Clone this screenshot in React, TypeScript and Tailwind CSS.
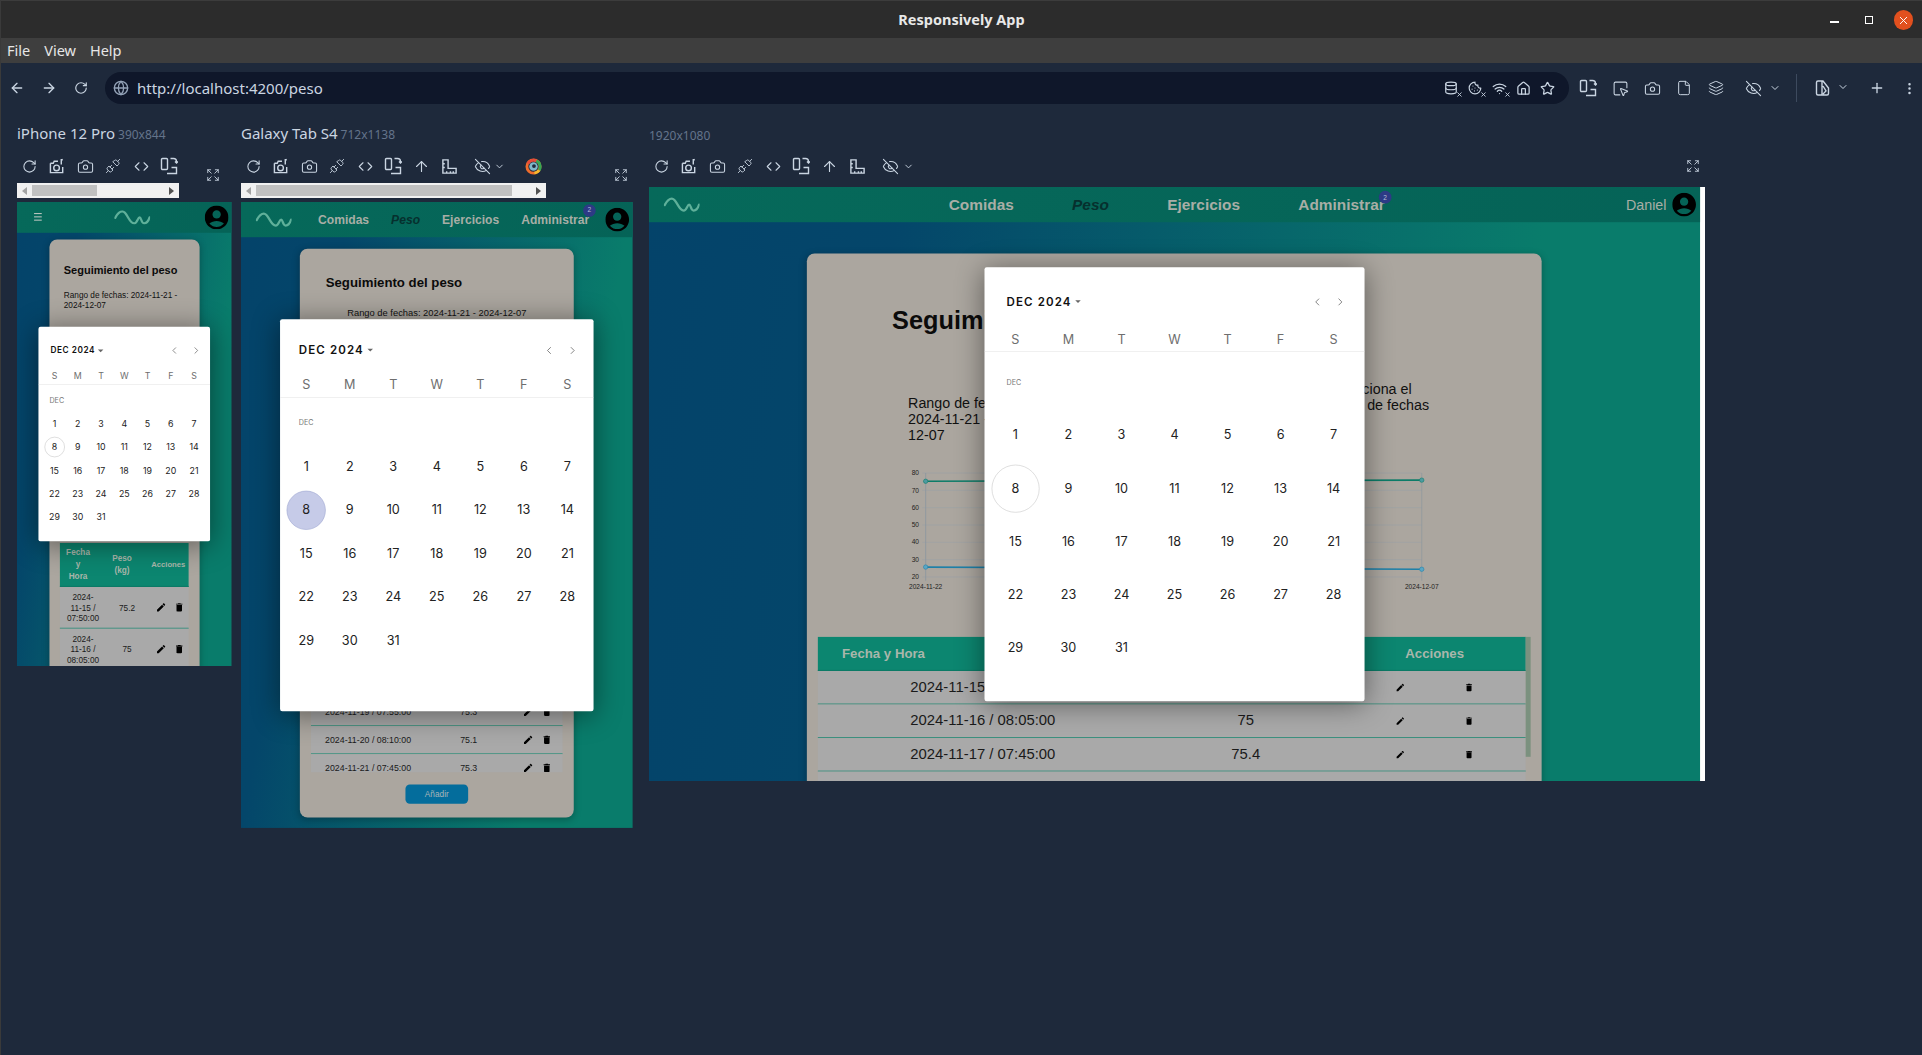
import React from "react";
import {
  ArrowLeft, ArrowRight, ArrowUp, Camera, ChevronDown, ChevronLeft, ChevronRight, Code, Cookie, Database,
  EllipsisVertical, Expand, EyeOff, File, Globe, House, Layers, Plus, RotateCw, SquareMousePointer, Star, Unplug, Wifi, X,
} from "lucide-react";

const sans = "font-['Liberation_Sans',Arial,sans-serif]";
const ui = "font-['Noto_Sans','Open_Sans',sans-serif]";
const cal = "font-['Inter','Liberation_Sans',sans-serif]";

function Rotate({ size = 18 }: { size?: number }) {
  return (
    <svg width={size} height={size} viewBox="0 0 18 18" fill="none" stroke="currentColor" strokeWidth="1.4">
      <rect x="1.5" y="1.5" width="6" height="11" rx="1" />
      <path d="M10.5 1.5h3a3 3 0 0 1 3 3v1.5M15 4.5l1.5 1.5L18 4.5M7 16.5h9.5v-6h-5" />
    </svg>
  );
}
function CameraPlus() {
  return (
    <svg width="17" height="17" viewBox="0 0 18 18" fill="none" stroke="currentColor" strokeWidth="1.5">
      <path d="M1.5 5.5h3l1-2h4M1.5 5.5v10h13v-6" />
      <circle cx="8" cy="10.5" r="3" />
      <path d="M13 1v6M14.5 1.5l-1.5 1" />
    </svg>
  );
}
function RulerCorner() {
  return (
    <svg width="17" height="17" viewBox="0 0 18 18" fill="none" stroke="currentColor" strokeWidth="1.5">
      <path d="M2 2h5.5v9H16v5H2zM2 6h2M2 10h2M6 14v2M10 14v2M13 14v2" />
    </svg>
  );
}
function Lighthouse() {
  return (
    <svg width="17" height="17" viewBox="0 0 18 18" fill="none">
      <circle cx="9" cy="9" r="7" stroke="#ef6c2b" strokeWidth="3" />
      <path d="M3 6a7 7 0 0 1 9-3" stroke="#e64a3b" strokeWidth="3" />
      <path d="M12 3a7 7 0 0 1 3 10" stroke="#35a853" strokeWidth="3" />
      <path d="M15 13a7 7 0 0 1-5 3" stroke="#f5b82e" strokeWidth="3" />
      <circle cx="9" cy="9" r="4.5" fill="#7fb8c9" />
      <circle cx="9.5" cy="8.5" r="2" fill="#1e293b" />
    </svg>
  );
}
function SplitDoc() {
  return (
    <svg width="18" height="18" viewBox="0 0 18 18" fill="none" stroke="currentColor" strokeWidth="1.4">
      <path d="M8 2H4a1.5 1.5 0 0 0-1.5 1.5v11A1.5 1.5 0 0 0 4 16h9a1.5 1.5 0 0 0 1.5-1.5V9L9 2zM8 2v14M9 7l3 5-3 3" />
    </svg>
  );
}
function Logo({ className }: { className: string }) {
  return (
    <svg className={className} viewBox="0 0 36 14" fill="none" stroke="#5fb09a" strokeWidth="2.3" strokeLinecap="round">
      <path d="M0.8 7.5C3 3.5 5.5 1 8 1c5 0 6.5 12 12 12 3 0 3.5-6 5.5-6 1.7 0 1.5 6 4.5 6 3 0 4.7-3.5 5.5-6" />
    </svg>
  );
}
function Avatar() {
  return (
    <svg className="w-[36px] h-[36px] scale-[1.2] shrink-0" viewBox="2 2 20 20" fill="#000">
      <path d="M12 2C6.48 2 2 6.48 2 12s4.48 10 10 10 10-4.48 10-10S17.52 2 12 2zm0 4c1.93 0 3.5 1.57 3.5 3.5S13.93 13 12 13s-3.5-1.57-3.5-3.5S10.07 6 12 6zm0 14c-2.03 0-4.43-.82-6.14-2.88C7.55 15.8 9.68 15 12 15s4.45.8 6.14 2.12C16.43 19.18 14.03 20 12 20z" />
    </svg>
  );
}
function Edit({ className }: { className: string }) {
  return (
    <svg className={className} viewBox="0 0 24 24" fill="#000">
      <path d="M3 17.25V21h3.75L17.81 9.94l-3.75-3.75L3 17.25zM20.71 7.04c.39-.39.39-1.02 0-1.41l-2.34-2.34c-.39-.39-1.02-.39-1.41 0l-1.83 1.83 3.75 3.75 1.83-1.83z" />
    </svg>
  );
}
function Trash({ className }: { className: string }) {
  return (
    <svg className={className} viewBox="0 0 24 24" fill="#000">
      <path d="M6 19c0 1.1.9 2 2 2h8c1.1 0 2-.9 2-2V7H6v12zM19 4h-3.5l-1-1h-5l-1 1H5v2h14V4z" />
    </svg>
  );
}

function Marked({ children }: { children: React.ReactNode }) {
  return (
    <span className="relative w-[24px] h-[20px] flex items-center justify-center text-slate-300">
      {children}
      <X size={7} strokeWidth={3} className="absolute right-0 bottom-0" />
    </span>
  );
}

function Toolbar({ extended, lighthouse }: { extended?: boolean; lighthouse?: boolean }) {
  const cell = "w-7 h-7 flex items-center justify-center shrink-0";
  return (
    <div className="flex h-7 items-center text-slate-300 -ml-[2px]">
      <span className={cell}><RotateCw size={15} strokeWidth={1.7} /></span>
      <span className={cell}><CameraPlus /></span>
      <span className={cell}><Camera size={17} strokeWidth={1.5} /></span>
      <span className={cell}><Unplug size={16} strokeWidth={1.3} /></span>
      <span className={cell}><Code size={15} strokeWidth={1.7} /></span>
      <span className={cell}><Rotate /></span>
      {extended && (
        <>
          <span className={cell}><ArrowUp size={17} strokeWidth={1.6} /></span>
          <span className={cell}><RulerCorner /></span>
          <span className={`${cell} ml-[5px]`}><EyeOff size={17} strokeWidth={1.5} /></span>
          <span className="w-[12px] h-7 flex items-center justify-center -ml-[2px]"><ChevronDown size={11} /></span>
        </>
      )}
      {lighthouse && <span className={`${cell} ml-[14px]`}><Lighthouse /></span>}
    </div>
  );
}

function ScrollTrack({ track, thumb }: { track: string; thumb: string }) {
  return (
    <div className={`mt-[3px] h-[15px] bg-[#f1f1f1] flex items-center ${track}`}>
      <span className="w-0 h-0 ml-[5px] border-y-[4px] border-y-transparent border-r-[5px] border-r-[#a3a3a3]" />
      <span className={`h-[11px] bg-[#c1c1c1] ${thumb}`} />
      <span className="w-0 h-0 ml-auto mr-[5px] border-y-[4px] border-y-transparent border-l-[5px] border-l-[#505050]" />
    </div>
  );
}

const weekdays = ["S", "M", "T", "W", "T", "F", "S"];
const days = Array.from({ length: 31 }, (_, i) => i + 1);

type CalCfg = {
  box: string; header: string; title: string; caret: string; arrows: string; arrowSize: number;
  week: string; weekRow: string; dec: string; cell: string; selected: string; day: string;
};

const calIphone: CalCfg = {
  box: "w-[312px] h-[390px]",
  header: "mt-[25px] h-[36px] pl-[22px] pr-[15px]",
  title: "text-[15px] tracking-[1px]",
  caret: "ml-[5px] border-x-[5px] border-t-[5px]",
  arrows: "gap-[20px]",
  arrowSize: 20,
  week: "mt-[10px] h-[34px]",
  weekRow: "text-[16px]",
  dec: "h-[50px] pt-[22px] pl-[20px]",
  cell: "h-[42.3px]",
  selected: "w-[37px] h-[37px] border border-[#c4c4c4]",
  day: "text-[16px]",
};
const calGalaxy: CalCfg = {
  box: "w-[570px] h-[713px]",
  header: "mt-[37px] h-[40px] pl-[34px] pr-[27px]",
  title: "text-[21px] tracking-[2px]",
  caret: "ml-[7px] border-x-[5px] border-t-[5px]",
  arrows: "gap-[21px]",
  arrowSize: 22,
  week: "mt-[20px] h-[46px]",
  weekRow: "text-[23px]",
  dec: "h-[86.5px] pt-[38px] pl-[34px]",
  cell: "h-[79px]",
  selected: "w-[71px] h-[71px] border border-[#9aa3cf] bg-[#c6cbe8]",
  day: "text-[23px]",
};
const calDesktop: CalCfg = {
  box: "w-[691px] h-[789px]",
  header: "mt-[43px] h-[40px] pl-[40px] pr-[33px]",
  title: "text-[21px] tracking-[2px]",
  caret: "ml-[7px] border-x-[5px] border-t-[5px]",
  arrows: "gap-[20px]",
  arrowSize: 22,
  week: "mt-[27px] h-[44px]",
  weekRow: "text-[23px]",
  dec: "h-[104px] pt-[48px] pl-[40px]",
  cell: "h-[96.4px]",
  selected: "w-[87px] h-[87px] border border-[#c4c4c4]",
  day: "text-[23px]",
};

function Calendar({ c }: { c: CalCfg }) {
  return (
    <div className="absolute inset-0 flex items-center justify-center">
      <div className={`${c.box} ${cal} bg-white rounded-[4px] shadow-[0_5px_50px_rgba(0,0,0,0.45)] overflow-hidden`}>
        <div className={`${c.header} flex items-center justify-between`}>
          <div className="flex items-center">
            <span className={`${c.title} font-semibold text-[#111]`}>DEC 2024</span>
            <span className={`${c.caret} w-0 h-0 border-x-transparent border-t-[#666]`} />
          </div>
          <div className={`flex items-center text-[#666] ${c.arrows}`}>
            <ChevronLeft size={c.arrowSize} strokeWidth={1.6} />
            <ChevronRight size={c.arrowSize} strokeWidth={1.6} />
          </div>
        </div>
        <div className={`${c.week} ${c.weekRow} grid grid-cols-7 px-2 items-center text-center text-[#6e6e6e] border-b border-[#e4e4e4]`}>
          {weekdays.map((d, i) => <span key={i}>{d}</span>)}
        </div>
        <div className={`${c.dec} text-[13px] leading-[14px] text-[#777]`}>DEC</div>
        <div className={`grid grid-cols-7 px-2 ${c.day} text-[#222]`}>
          {days.map((d) => (
            <div key={d} className={`${c.cell} flex items-center justify-center`}>
              {d === 8 ? <span className={`${c.selected} rounded-full flex items-center justify-center`}>{d}</span> : d}
            </div>
          ))}
        </div>
      </div>
    </div>
  );
}

function Badge({ className }: { className: string }) {
  return (
    <span className={`absolute w-[23px] h-[23px] rounded-full bg-[#2d3a85] text-[#b9bdd8] text-[12px] font-normal flex items-center justify-center ${className}`}>2</span>
  );
}

const pageBg = "bg-[linear-gradient(100deg,#04436a_0%,#04466a_22%,#097c6b_78%)]";
const navBg = "bg-[linear-gradient(100deg,#06695a,#056357)]";
const cardBg = "bg-[#aba69f] rounded-[14px] shadow-[0_4px_14px_rgba(0,0,0,0.25)]";
const headBg = "bg-[#0c8670]";

function IphonePage() {
  const rows = [["2024-", "11-15 /", "07:50:00", "75.2"], ["2024-", "11-16 /", "08:05:00", "75"]];
  return (
    <div className={`relative w-[390px] h-[844px] scale-[0.55] origin-top-left overflow-hidden ${pageBg} ${sans}`}>
      <div className={`h-[56px] ${navBg} flex items-center justify-between pl-[31px] pr-[9px]`}>
        <div className="flex flex-col gap-[4px] w-[14px] mt-[-2px]">
          <span className="h-[2px] bg-[#b5c2bc]" /><span className="h-[2px] bg-[#b5c2bc]" /><span className="h-[2px] bg-[#b5c2bc]" />
        </div>
        <Logo className="w-[65px] h-[26px] ml-[28px]" />
        <Avatar />
      </div>
      <div className={`${cardBg} mt-[12px] ml-[59px] w-[273px] h-[800px]`}>
        <h1 className="pt-[43px] pl-[26px] text-[20px] leading-[24px] font-bold text-[#0b0b0b]">Seguimiento del peso</h1>
        <p className="pt-[26px] pl-[26px] text-[15px] leading-[17.5px] text-[#111]">Rango de fechas: 2024-11-21 -<br />2024-12-07</p>
        <div className="mt-[424px] ml-[19px] w-[234px]">
          <div className={`grid grid-cols-[66px_94px_74px] h-[80px] items-center text-center ${headBg} border-b-2 border-[#0b7a66] text-[#a9b6ab] text-[15px] font-bold leading-[22px]`}>
            <span>Fecha<br />y<br />Hora</span>
            <span>Peso<br />(kg)</span>
            <span className="text-[14px]">Acciones</span>
          </div>
          {rows.map((r) => (
            <div key={r[2]} className="grid grid-cols-[84px_76px_74px] h-[76px] items-center text-center bg-[#a9a9a9] border-b-2 border-[#3c8f7e] text-[#1a1a1a] text-[15px] leading-[19px]">
              <span>{r[0]}<br />{r[1]}<br />{r[2]}</span>
              <span>{r[3]}</span>
              <span className="flex justify-center gap-[13px] pl-[6px]"><Edit className="w-[20px] h-[20px]" /><Trash className="w-[20px] h-[20px]" /></span>
            </div>
          ))}
        </div>
      </div>
      <Calendar c={calIphone} />
    </div>
  );
}

function GalaxyPage() {
  const rows = [
    ["2024-11-15 / 07:50:00", "75.2"], ["2024-11-16 / 08:05:00", "75"], ["2024-11-17 / 07:45:00", "75.4"],
    ["2024-11-18 / 08:00:00", "75.2"], ["2024-11-19 / 07:55:00", "75.3"], ["2024-11-20 / 08:10:00", "75.1"], ["2024-11-21 / 07:45:00", "75.3"],
  ];
  return (
    <div className={`relative w-[712px] h-[1138px] scale-[0.55] origin-top-left overflow-hidden ${pageBg} ${sans}`}>
      <div className={`h-[64px] ${navBg} flex items-center pl-[27px] pr-[10px]`}>
        <Logo className="w-[65px] h-[28px] shrink-0" />
        <nav className="ml-[48px] flex gap-[40px] flex-1 text-[22px] font-bold text-[#a8aea6]">
          <span>Comidas</span>
          <span className="italic text-[#06302e]">Peso</span>
          <span>Ejercicios</span>
          <span className="relative">Administrar<Badge className="-top-[12px] -right-[12px]" /></span>
        </nav>
        <Avatar />
      </div>
      <div className={`${cardBg} mt-[21px] ml-[107px] w-[498px] h-[1034px]`}>
        <h1 className="pt-[47px] pl-[47px] text-[24px] leading-[30px] font-bold text-[#0b0b0b]">Seguimiento del peso</h1>
        <p className="pt-[28px] text-center text-[17px] leading-[24px] text-[#111]">Rango de fechas: 2024-11-21 - 2024-12-07</p>
        <div className="mt-[404px] ml-[20px] w-[458px] h-[418.5px] overflow-hidden">
          <div className={`h-[80px] ${headBg}`} />
          {rows.map((r) => (
            <div key={r[0]} className="grid grid-cols-[208px_158px_92px] h-[51px] items-center text-center bg-[#a9a9a9] border-b-2 border-[#4c9585] text-[#1a1a1a] text-[16px]">
              <span>{r[0]}</span>
              <span>{r[1]}</span>
              <span className="flex justify-center gap-[14px]"><Edit className="w-[20px] h-[20px]" /><Trash className="w-[20px] h-[20px]" /></span>
            </div>
          ))}
        </div>
        <div className="flex justify-center mt-[22px]">
          <span className="w-[114px] h-[35px] rounded-[8px] bg-[#046d9c] text-[#a9b5b8] text-[15px] flex items-center justify-center">Añadir</span>
        </div>
      </div>
      <Calendar c={calGalaxy} />
    </div>
  );
}

function Chart() {
  const ys = [80, 70, 60, 50, 40, 30, 20];
  const y = (v: number) => 13 + (80 - v) * 3.15;
  return (
    <svg className="w-[1027px] h-[236px]" viewBox="0 0 1027 236" fill="none">
      {ys.map((v) => (
        <g key={v}>
          <line x1="50" x2="958" y1={y(v)} y2={y(v)} stroke="#9aa0a6" strokeOpacity="0.75" strokeWidth="1.5" />
          <text x="44" y={y(v) + 4} textAnchor="end" fontSize="12" fill="#222" fontFamily="Liberation Sans, sans-serif">{v}</text>
        </g>
      ))}
      <line x1="56" x2="56" y1="13" y2="209" stroke="#8d979f" strokeWidth="1.5" />
      <line x1="958" x2="958" y1="13" y2="209" stroke="#8d979f" strokeOpacity="0.8" strokeWidth="1.5" />
      <path d="M56 28L958 26" stroke="#0c7c68" strokeWidth="3" />
      <path d="M56 184L958 188" stroke="#1f80a8" strokeWidth="3" />
      <circle cx="56" cy="28" r="4" fill="#4d9aa0" stroke="#0c7c68" />
      <circle cx="958" cy="26" r="4" fill="#4d9aa0" stroke="#0c7c68" />
      <circle cx="56" cy="184" r="4" fill="#5aa6c4" stroke="#1f80a8" />
      <circle cx="958" cy="188" r="4" fill="#5aa6c4" stroke="#1f80a8" />
      <text x="56" y="224" textAnchor="middle" fontSize="12" fill="#222" fontFamily="Liberation Sans, sans-serif">2024-11-22</text>
      <text x="958" y="224" textAnchor="middle" fontSize="12" fill="#222" fontFamily="Liberation Sans, sans-serif">2024-12-07</text>
    </svg>
  );
}

function DesktopPage() {
  const rows = [
    ["2024-11-15 / 07:50:00", "75.2"], ["2024-11-16 / 08:05:00", "75"], ["2024-11-17 / 07:45:00", "75.4"],
  ];
  return (
    <div className={`relative w-[1920px] h-[1080px] scale-[0.55] origin-top-left overflow-hidden bg-white ${sans}`}>
      <div className={`mr-[9px] h-[1080px] ${pageBg}`}>
        <div className={`h-[64px] ${navBg} flex items-center pl-[27px] pr-[11px]`}>
          <Logo className="w-[65px] h-[28px] shrink-0" />
          <nav className="ml-[453px] flex gap-[106px] flex-1 text-[28px] font-bold text-[#a8aea6]">
            <span>Comidas</span>
            <span className="italic text-[#06302e]">Peso</span>
            <span>Ejercicios</span>
            <span className="relative">Administrar<Badge className="-top-[4px] -right-[12px]" /></span>
          </nav>
          <span className="text-[26px] text-[#a8aea6] mr-[14px]">Daniel</span>
          <Avatar />
        </div>
        <div className={`${cardBg} mt-[57px] ml-[287px] w-[1336px] h-[1000px]`}>
          <h1 className="pt-[94px] pl-[155px] text-[46px] leading-[56px] font-bold text-[#0b0b0b]">Seguimiento del peso</h1>
          <div className="mt-[82px] flex items-start pl-[184px] text-[26px] leading-[29px] text-[#111] h-[154px]">
            <p className="w-[761px] pt-[26px]">Rango de fechas:<br />2024-11-21 - 2024-<br />12-07</p>
            <p>Selecciona el<br />rango de fechas</p>
          </div>
          <div className="pl-[160px]"><Chart /></div>
          <div className="relative mt-[75px] ml-[20px] w-[1296px]">
            <div className="absolute top-0 right-0 w-[9px] h-[218px] bg-[#7b917f]" />
            <div className="w-[1287px]">
              <div className={`grid grid-cols-[600px_356px_331px] h-[62px] items-center ${headBg} border-b-2 border-[#0b7a66] text-[#a9b6ab] text-[24px] font-bold`}>
                <span className="pl-[44px]">Fecha y Hora</span>
                <span className="text-center">Peso (kg)</span>
                <span className="text-center">Acciones</span>
              </div>
              {rows.map((r) => (
                <div key={r[0]} className="grid grid-cols-[600px_356px_331px] h-[61px] items-center text-center bg-[#a9a9a9] border-b-2 border-[#3c8f7e] text-[#1a1a1a] text-[27px]">
                  <span>{r[0]}</span>
                  <span>{r[1]}</span>
                  <span className="flex justify-center gap-[107px]"><Edit className="w-[18px] h-[18px]" /><Trash className="w-[18px] h-[18px]" /></span>
                </div>
              ))}
              <div className="h-[61px] bg-[#a9a9a9]" />
            </div>
          </div>
        </div>
      </div>
      <div className="absolute inset-0">
        <div className="relative w-[1911px] h-full"><Calendar c={calDesktop} /></div>
      </div>
    </div>
  );
}

function DeviceLabel({ name, size, nudge }: { name?: string; size: string; nudge?: string }) {
  return (
    <div className={`h-6 mt-[9px] flex items-baseline gap-[3px] ${ui} ${nudge ?? ""}`}>
      {name && <span className="text-[15px] text-[#cbd5e1]">{name}</span>}
      <span className="text-[12px] text-[#64748b]">{size}</span>
    </div>
  );
}

export default function App() {
  return (
    <div className={`w-screen h-screen overflow-hidden bg-[#1e293b] flex flex-col border-l border-[#3a3a3a] ${ui}`}>
      <div className="h-[38px] shrink-0 bg-[#2c2c2c] border-t border-[#3c3c3c] relative flex items-center justify-center">
        <span className="text-[14.5px] font-bold text-[#e8e8e8]">Responsively App</span>
        <div className="absolute right-[9px] top-[9px] flex items-center text-white">
          <span className="w-[9px] h-[1.5px] bg-white mt-[4px]" />
          <span className="ml-[26px] w-[8px] h-[8px] border border-white" />
          <span className="ml-[21px] w-[19px] h-[20px] rounded-full bg-[#e2501e] flex items-center justify-center"><X size={13} strokeWidth={1.8} /></span>
        </div>
      </div>
      <div className="h-[25px] shrink-0 bg-[#3e3e3e] flex items-center pl-[6px] gap-[14px] text-[14.5px] text-[#e6e6e6]">
        <span>File</span><span>View</span><span>Help</span>
      </div>
      <div className="h-[50px] shrink-0 flex items-center text-slate-300">
        <span className="w-8 flex justify-center"><ArrowLeft size={16} /></span>
        <span className="w-8 flex justify-center"><ArrowRight size={16} /></span>
        <span className="w-8 flex justify-center"><RotateCw size={14} /></span>
        <div className="ml-[8px] w-[1464px] h-[32px] rounded-full bg-[#0f172a] flex items-center pl-[8px] pr-[10px]">
          <Globe size={16} className="text-[#94a3b8]" />
          <span className="ml-[8px] text-[15px] text-[#cbd5e1] flex-1">http://localhost:4200/peso</span>
          <Marked><Database size={14} /></Marked>
          <Marked><Cookie size={14} /></Marked>
          <Marked><Wifi size={15} /></Marked>
          <span className="w-[24px] flex justify-center"><House size={15} /></span>
          <span className="w-[24px] flex justify-center"><Star size={15} /></span>
        </div>
        <div className="ml-[3px] flex items-center">
          <span className="w-8 flex justify-center"><Rotate /></span>
          <span className="w-8 flex justify-center"><SquareMousePointer size={17} strokeWidth={1.5} /></span>
          <span className="w-8 flex justify-center"><Camera size={17} strokeWidth={1.5} /></span>
          <span className="w-8 flex justify-center"><File size={16} strokeWidth={1.5} /></span>
          <span className="w-8 flex justify-center"><Layers size={16} strokeWidth={1.5} /></span>
          <span className="w-8 ml-[5px] flex justify-center"><EyeOff size={17} strokeWidth={1.5} /></span>
          <span className="w-3 flex justify-center"><ChevronDown size={12} /></span>
          <span className="ml-[15px] w-px h-[28px] bg-[#3d4a5e]" />
          <span className="ml-[17px] w-[18px] flex justify-center"><SplitDoc /></span>
          <span className="w-[22px] -mt-[3px] flex justify-center"><ChevronDown size={12} /></span>
          <span className="ml-[14px] w-[18px] flex justify-center"><Plus size={16} /></span>
          <span className="ml-[14px] w-[18px] flex justify-center"><EllipsisVertical size={15} /></span>
        </div>
      </div>

      <div className="flex items-start pl-[16px]">
        <div className="w-[215px] shrink-0">
          <DeviceLabel name="iPhone 12 Pro" size="390x844" />
          <div className="mt-[6px] flex items-center justify-between pr-[12px] text-slate-300">
            <div className="w-[162px]">
              <Toolbar />
              <ScrollTrack track="w-[162px]" thumb="ml-[5px] w-[65px]" />
            </div>
            <Expand size={14} strokeWidth={1.5} />
          </div>
          <div className="mt-[4px] w-[215px] h-[464px] overflow-hidden"><IphonePage /></div>
        </div>
        <div className="ml-[9px] w-[392px] shrink-0">
          <DeviceLabel name="Galaxy Tab S4" size="712x1138" />
          <div className="mt-[6px] flex items-center justify-between pr-[5px] text-slate-300">
            <div className="w-[305px]">
              <Toolbar extended lighthouse />
              <ScrollTrack track="w-[305px]" thumb="ml-[5px] w-[256px]" />
            </div>
            <Expand size={14} strokeWidth={1.5} />
          </div>
          <div className="mt-[4px] w-[392px] h-[626px] overflow-hidden"><GalaxyPage /></div>
        </div>
        <div className="ml-[16px] w-[1056px] shrink-0">
          <DeviceLabel size="1920x1080" nudge="pt-[5px]" />
          <div className="mt-[6px] flex items-center justify-between pr-[5px] text-slate-300">
            <Toolbar extended />
            <Expand size={14} strokeWidth={1.5} />
          </div>
          <div className="mt-[7px] w-[1056px] h-[594px] overflow-hidden"><DesktopPage /></div>
        </div>
      </div>
    </div>
  );
}
